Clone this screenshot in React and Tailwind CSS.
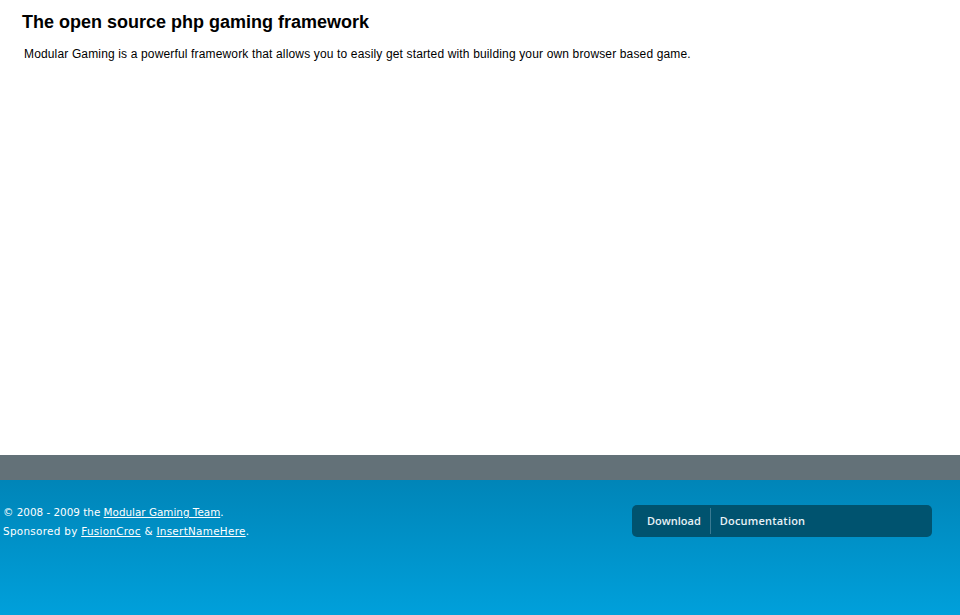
export default function App() {
  return (
    <div className="min-h-[615px] flex flex-col bg-white" style={{ fontFamily: '"Liberation Sans", Arial, sans-serif' }}>
      <div className="h-[455px] px-[22px] pt-[11px]">
        <h1 className="text-[18px] leading-[22px] font-bold text-black">The open source php gaming framework</h1>
        <p className="mt-[14px] ml-[2px] text-[12px] leading-[15px] tracking-[0.15px] text-black">
          Modular Gaming is a powerful framework that allows you to easily get started with building your own browser based game.
        </p>
      </div>
      <div className="h-[25px] bg-[#637178]"></div>
      <div className="flex-1 h-[135px] bg-gradient-to-b from-[#0085b8] to-[#00a0db] flex items-start justify-between pl-[3px] pr-[28px] pt-[25px]">
        <div className="-mt-[2px] text-[10.4px] leading-[19px] text-white" style={{ fontFamily: '"DejaVu Sans", Verdana, sans-serif' }}>
          <p>© 2008 - 2009 the <a href="#" className="underline">Modular Gaming Team</a>.</p>
          <p className="tracking-[0.3px]">Sponsored by <a href="#" className="underline">FusionCroc</a> &amp; <a href="#" className="underline">InsertNameHere</a>.</p>
        </div>
        <nav className="w-[300px] h-[32px] rounded-[5px] bg-[#00536f] flex items-center pl-[15px] text-[11px] font-semibold text-[#e8f2f6]" style={{ fontFamily: '"Open Sans", sans-serif' }}>
          <a href="#" className="pr-[9px]">Download</a>
          <span className="w-px h-[26px] bg-[#3a7a92]"></span>
          <a href="#" className="pl-[9px] tracking-[0.2px]">Documentation</a>
        </nav>
      </div>
    </div>
  );
}
